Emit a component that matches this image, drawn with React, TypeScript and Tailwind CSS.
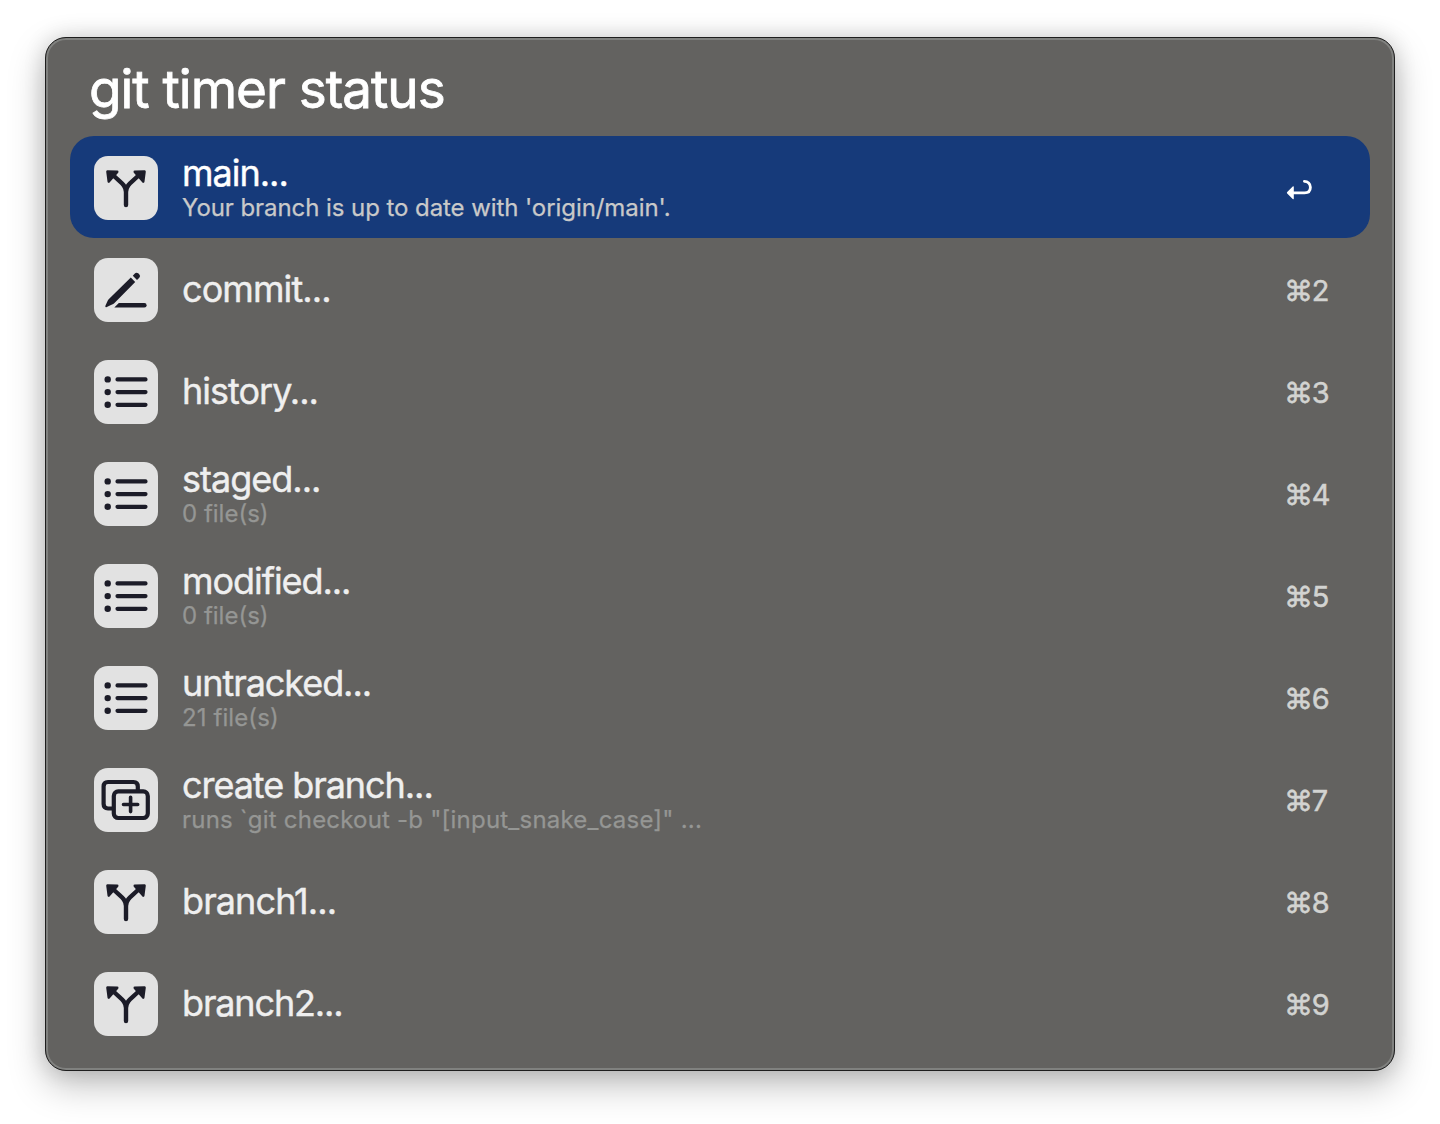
import type { ReactNode } from "react";

const ink = "#1c1c28";

function BranchIcon() {
  return (
    <svg width="64" height="64" viewBox="0 0 64 64" fill="none" stroke={ink} strokeWidth="4.400" strokeLinecap="round">
      <path d="M32 49V36C32 29 26 26 20.500 20.500M32 36C32 29 38 26 43.500 20.500" />
      <path d="M13.500 15.500L23.200 15.800L14.800 25.500Z M50.500 15.500L40.800 15.800L49.200 25.500Z" fill={ink} strokeWidth="2.600" strokeLinejoin="round" />
    </svg>
  );
}

function PencilIcon() {
  return (
    <svg width="64" height="64" viewBox="0 0 64 64" fill={ink}>
      <path d="M36.800 19.600L41.200 24L20.500 45Q19.500 46 17.500 46.800L12.800 49Q10.700 49.800 11.500 47.500L13.800 42.600Q14.600 41 15.700 40.200Z" />
      <path d="M38.800 17.700L40.600 15.700Q42.300 13.800 44.200 15.300L45.200 16.300Q47 18 45.300 19.800L43 22Z" />
      <path d="M24.800 45H50.400A2.200 2.200 0 0 1 50.400 49.400H20.300Z" />
    </svg>
  );
}

function ListIcon() {
  return (
    <svg width="64" height="64" viewBox="0 0 64 64" fill={ink}>
      <circle cx="13.700" cy="19.400" r="3.200" />
      <circle cx="13.700" cy="32.100" r="3.200" />
      <circle cx="13.700" cy="44.800" r="3.200" />
      <path d="M23.500 19.400H51.500M23.500 32.100H51.500M23.500 44.800H51.500" stroke={ink} strokeWidth="4.200" strokeLinecap="round" />
    </svg>
  );
}

function CreateIcon() {
  return (
    <svg width="64" height="64" viewBox="0 0 64 64" fill="none" stroke={ink} strokeWidth="4.200" strokeLinecap="round" strokeLinejoin="round">
      <path d="M19 40.500H14Q9.600 40.500 9.600 36V18.500Q9.600 14 14 14H39.500Q43.800 14 43.800 18.500V22" />
      <rect x="19.800" y="23.400" width="34" height="26.600" rx="4.500" />
      <path d="M36.600 29.300V43.600M29.500 36.500H43.700" strokeWidth="3.600" />
    </svg>
  );
}

function ReturnIcon() {
  return (
    <svg className="ml-[2px] mt-[2px]" width="28" height="22" viewBox="0 0 28 22" fill="none">
      <path d="M7 13.800H18.500C22.300 13.800 24.400 11.500 24.400 8.200C24.400 4.800 21.800 2.300 18.400 2.300" stroke="#fff" strokeWidth="2.800" strokeLinecap="round" />
      <path d="M1.200 13.100L6.700 7.600Q7.800 6.800 7.800 8.100V19.400Q7.800 20.700 6.700 19.900L1.200 14.500Q.500 13.800 1.200 13.100Z" fill="#fff" />
    </svg>
  );
}

interface Item {
  icon: ReactNode;
  title: string;
  titleTracking?: string;
  sub?: string;
  subTracking?: string;
}

const items: Item[] = [
  { icon: <BranchIcon />, title: "main...", sub: "Your branch is up to date with 'origin/main'.", subTracking: "tracking-[-0.070px]" },
  { icon: <PencilIcon />, title: "commit...", titleTracking: "tracking-[-0.9px]" },
  { icon: <ListIcon />, title: "history..." },
  { icon: <ListIcon />, title: "staged...", sub: "0 file(s)" },
  { icon: <ListIcon />, title: "modified...", titleTracking: "tracking-[-1.060px]", sub: "0 file(s)" },
  { icon: <ListIcon />, title: "untracked...", titleTracking: "tracking-[-1.060px]", sub: "21 file(s)", subTracking: "tracking-[0.1px]" },
  { icon: <CreateIcon />, title: "create branch...", titleTracking: "tracking-[-1.060px]", sub: "runs `git checkout -b \"[input_snake_case]\" ...", subTracking: "tracking-[0.210px]" },
  { icon: <BranchIcon />, title: "branch1...", titleTracking: "tracking-[-0.9px]" },
  { icon: <BranchIcon />, title: "branch2...", titleTracking: "tracking-[-1.150px]" },
];

function Row({ item, index }: { item: Item; index: number }) {
  const selected = index === 0;
  return (
    <li className={`flex h-[102px] items-center rounded-[24px] pl-6 ${selected ? "bg-[#163a7a]" : ""}`}>
      <span className="mt-[2px] size-16 shrink-0 rounded-[14px] bg-[#e2e2e2]">{item.icon}</span>
      <div className="ml-6 flex-1 whitespace-nowrap">
        <div className={`text-[36px] leading-[42px] [-webkit-text-stroke:0.4px] ${item.titleTracking ?? "tracking-[-1px]"} ${selected ? "text-white" : "text-[#efefef]"}`}>{item.title}</div>
        {item.sub && (
          <div className={`text-[24px] leading-[28px] [-webkit-text-stroke:0.25px] ${item.subTracking ?? "tracking-[0px]"} ${selected ? "text-[#c9c9c9]" : "text-[#959694]"}`}>{item.sub}</div>
        )}
      </div>
      <div className="w-[86px] shrink-0 whitespace-nowrap pt-1 text-[29px] leading-[36px] tracking-[-1.300px] text-[#d2d3d1] [-webkit-text-stroke:0.5px]">
        {selected ? <ReturnIcon /> : `⌘${index + 1}`}
      </div>
    </li>
  );
}

export default function App() {
  return (
    <div className="h-[1124px] w-[1440px] overflow-hidden bg-white px-[45px] pt-[37px] font-['Inter',sans-serif]">
      <main className="h-[1034px] w-[1350px] rounded-[21px] border border-[#1e1e1e] bg-[#636260] px-6 shadow-[inset_0_0_0_2px_#80817f,0_14px_36px_rgba(0,0,0,0.25),0_0_22px_rgba(0,0,0,0.14)]">
        <h1 className="h-[98px] pl-[19px] pt-[19px] text-[53px] font-normal leading-[64px] tracking-[-1.020px] text-white [-webkit-text-stroke:0.8px]">git timer status</h1>
        <ul>
          {items.map((item, i) => (
            <Row key={item.title} item={item} index={i} />
          ))}
        </ul>
      </main>
    </div>
  );
}
